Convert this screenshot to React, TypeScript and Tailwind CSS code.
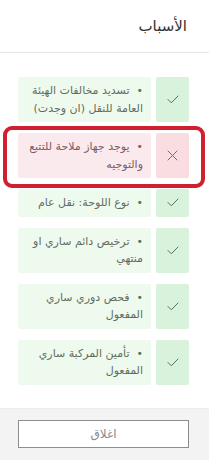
import React from 'react';

type Reason = { lines: string[]; ok: boolean };

const reasons: Reason[] = [
  { lines: ['تسديد مخالفات الهيئة', 'العامة للنقل (ان وجدت)'], ok: true },
  { lines: ['يوجد جهاز ملاحة للتتبع', 'والتوجيه'], ok: false },
  { lines: ['نوع اللوحة: نقل عام'], ok: true },
  { lines: ['ترخيص دائم ساري او', 'منتهي'], ok: true },
  { lines: ['فحص دوري ساري', 'المفعول'], ok: true },
  { lines: ['تأمين المركبة ساري', 'المفعول'], ok: true },
];

const CheckIcon = () => (
  <svg width="12" height="9" viewBox="0 0 12 9" fill="none">
    <path d="M1 4.5 L4.3 7.8 L11 1" stroke="#56705a" strokeWidth="1" strokeLinecap="round" strokeLinejoin="round" />
  </svg>
);

const XIcon = () => (
  <svg width="11" height="11" viewBox="0 0 11 11" fill="none">
    <path d="M1 1 L10 10 M10 1 L1 10" stroke="#7d6b6e" strokeWidth="1" strokeLinecap="round" />
  </svg>
);

const ReasonRow = ({ reason }: { reason: Reason }) => {
  const { ok, lines } = reason;
  return (
    <div className="relative flex gap-[5px]">
      <div
        className={`w-[33px] shrink-0 flex items-center justify-center rounded-[2px] ${
          ok ? 'bg-[#d9f2db]' : 'bg-[#f9dde1]'
        }`}
      >
        {ok ? <CheckIcon /> : <XIcon />}
      </div>
      <div
        className={`flex-1 rounded-[2px] pr-[8px] py-[5px] text-[11px] leading-[17.5px] ${
          ok ? 'bg-[#effaef] text-[#5f6c60]' : 'bg-[#fbeaed] text-[#7f5b61]'
        }`}
      >
        {lines.map((line, i) => (
          <div key={i}>
            {i === 0 && (
              <span className={`ml-[7px] ${ok ? 'text-[#4f7552]' : 'text-[#b0485a]'}`}>•</span>
            )}
            {line}
          </div>
        ))}
      </div>
      {!ok && (
        <div className="absolute -top-[7px] -bottom-[10px] -left-[15px] -right-[16px] border-[4px] border-[#d01f2f] rounded-[9px] pointer-events-none" />
      )}
    </div>
  );
};

export default function App() {
  return (
    <div
      dir="rtl"
      className="w-[209px] h-[460px] bg-white flex flex-col overflow-hidden"
      style={{ fontFamily: '"DejaVu Sans", "Noto Sans", sans-serif' }}
    >
      {/* Header */}
      <div className="h-[53px] shrink-0 border-b border-[#e6e6e6] flex items-center pr-[22px]">
        <h2 className="text-[15px] text-[#333] font-normal">الأسباب</h2>
      </div>

      {/* Reasons */}
      <div className="flex-1 flex flex-col gap-[11px] pt-[24px] pr-[20px] pl-[18px]">
        {reasons.map((r, i) => (
          <ReasonRow key={i} reason={r} />
        ))}
      </div>

      {/* Footer */}
      <div className="h-[52px] shrink-0 bg-[#f3f3f3] border-t border-[#ececec] pt-[11px] pr-[20px] pl-[18px]">
        <button className="w-full h-[28px] bg-white border border-[#8d8d8d] text-[12px] text-[#8a8a8a]">
          اغلاق
        </button>
      </div>
    </div>
  );
}
